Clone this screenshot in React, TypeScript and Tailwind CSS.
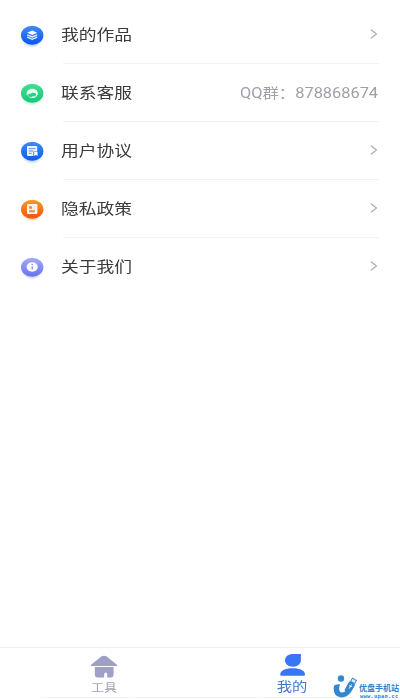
import type { ReactNode } from 'react'

type MenuItem = {
  label: string
  icon: ReactNode
  value?: string
}

type BadgeProps = {
  id: string
  from: string
  to: string
  glow: string
  children: ReactNode
}

function Badge({ id, from, to, glow, children }: BadgeProps) {
  return (
    <svg viewBox="0 0 32 30" className="w-8 h-[30px] shrink-0">
      <defs>
        <linearGradient id={id} x1="0" y1="0" x2="0" y2="1">
          <stop offset="0" stopColor={from} />
          <stop offset="1" stopColor={to} />
        </linearGradient>
        <filter id={`${id}-glow`} x="-30%" y="-30%" width="160%" height="160%">
          <feGaussianBlur stdDeviation="1.3" />
        </filter>
      </defs>
      <ellipse cx="16" cy="17.5" rx="9.5" ry="8.8" fill={glow} opacity="0.45" filter={`url(#${id}-glow)`} />
      <ellipse cx="16.2" cy="15.2" rx="11.2" ry="9.5" fill={`url(#${id})`} />
      {children}
    </svg>
  )
}

const items: MenuItem[] = [
  {
    label: '我的作品',
    icon: (
      <Badge id="works" from="#3f8cfb" to="#0b55ee" glow="#4d8dff">
        <path d="M16.2 10.5l5 2.2-5 2.2-5-2.2z" fill="#fff" />
        <path d="M11.2 14.800l5 2.1 5-2.1M11.2 17.2l5 2.1 5-2.1" fill="none" stroke="#e6f0ff" strokeWidth="1.4" />
      </Badge>
    ),
  },
  {
    label: '联系客服',
    value: 'QQ群：878868674',
    icon: (
      <Badge id="service" from="#3fe08f" to="#17c777" glow="#4be39b">
        <path
          d="M10.500 16.800c-.3-3.800 2-6 5.700-6s6 2.200 5.700 6h-1.700l-.9-2.100c-1 .5-1.900.4-2.700-.3-1.200 1.200-2.600 1.500-4 1l-.5 1.400z"
          fill="#e9fff3"
        />
        <path d="M12 17.300c.8 1.700 2.200 2.500 4.200 2.500" fill="none" stroke="#b5f5d4" strokeWidth="0.900" />
        <path d="M20.600 16.500c-.2 1.600-1.200 2.600-3 2.900" fill="none" stroke="#e9fff3" strokeWidth="1.100" />
        <ellipse cx="17" cy="19.200" rx="1.500" ry="0.900" fill="#e9fff3" />
      </Badge>
    ),
  },
  {
    label: '用户协议',
    icon: (
      <Badge id="terms" from="#3a8df8" to="#0c5dee" glow="#4d8dff">
        <rect x="11" y="10.100" width="10.200" height="9.800" rx="1" fill="#eef5ff" />
        <path d="M12.700 12.700h6.800M12.700 15h4.500M12.700 17.300h3" stroke="#3d86f3" strokeWidth="0.900" />
        <path d="M17.300 15.500h4.700v4.500h-4.700z" fill="#2f7cf2" />
        <path d="M18.200 16.100h3.300v4l-1.600-1.300-1.700 1.300z" fill="#fff" />
      </Badge>
    ),
  },
  {
    label: '隐私政策',
    icon: (
      <Badge id="privacy" from="#fb9a28" to="#f0530e" glow="#ff9655">
        <rect x="11" y="10.100" width="10.400" height="9.900" rx="1" fill="#fff4e9" />
        <path d="M13 12.200h3v2.500h-3zM13 16.200h6v2h-6z" fill="#f58b45" />
        <path d="M17.200 12.700h2M17.200 14.300h2" stroke="#fbc7a2" strokeWidth="0.700" />
      </Badge>
    ),
  },
  {
    label: '关于我们',
    icon: (
      <Badge id="about" from="#a6adf6" to="#6672ee" glow="#8e98ff">
        <ellipse cx="16.200" cy="15" rx="5.600" ry="4.700" fill="#fff" />
        <path d="M16.200 14.200v3.300" stroke="#7c86ee" strokeWidth="1.200" />
        <circle cx="16.200" cy="12.600" r="0.750" fill="#7c86ee" />
      </Badge>
    ),
  },
]

function Chevron() {
  return (
    <svg viewBox="0 0 8 10" className="w-2 h-2.5 mr-px mb-0.5" fill="none" stroke="#a9a9af" strokeWidth="1.1">
      <path d="M1 0.800l5.500 4.200-5.500 4.200" />
    </svg>
  )
}

function HomeIcon() {
  return (
    <svg viewBox="0 0 28 24" className="w-7 h-6" fill="#9fa0c8">
      <path d="M11.600 1.300Q14 .1 16.400 1.300L27 9.700q.8 1.100-.5 1.300H1.500Q.2 10.800 1 9.700z" />
      <path d="M4.800 12h18.800v7.500q0 3-3 3h-3.400v-3.300q0-1.700-1.500-1.700t-1.500 1.700v3.300H7.800q-3 0-3-3z" />
    </svg>
  )
}

function ProfileIcon() {
  return (
    <svg viewBox="0 0 28 24" className="w-7 h-6" fill="#3975f6">
      <path d="M14 .9h7.900v6.200c0 3.900-3.300 6.700-7.900 6.700S6 11 6 7.300 9.400.9 14 .9z" />
      <path d="M1.200 21.800c0-4 4.500-6.500 12.400-6.500S26 17.800 26 21.800q0 1-1 1H2.200q-1 0-1-1z" />
    </svg>
  )
}

function Watermark() {
  return (
    <div className="absolute left-[333px] top-[674px] w-[67px] h-[26px] flex text-[#2f82cc]">
      <svg viewBox="0 0 24 26" className="w-6 h-[26px] shrink-0">
        <circle cx="8" cy="4.500" r="3.200" fill="#3187d2" />
        <path
          d="M1 11.500q3.200-1.500 6-1.300-2 6.500.8 8 2.800 1.200 6.400-2.600l3.300 3q-4.600 5.700-10.300 4.700Q-.6 22 1 11.500z"
          fill="#3187d2"
        />
        <g transform="rotate(30 17.500 12)">
          <rect x="14.200" y="7.600" width="6.800" height="12" rx="2.600" fill="#3187d2" />
          <rect x="15.300" y="4.300" width="4.600" height="3.600" fill="#d8ecfa" stroke="#3187d2" strokeWidth="0.900" />
          <path d="M17.600 10v5M16.300 11.500l1.300 1.500 1.300-1.500" fill="none" stroke="#fff" strokeWidth="0.700" />
        </g>
      </svg>
      <div className="pt-[9px] pl-[2px] whitespace-nowrap">
        <div className="text-[8px] leading-[10px] font-bold">优盘手机站</div>
        <div className="pl-px text-[5.5px] leading-[6px] font-bold tracking-[0.2px] font-['DejaVu_Sans_Mono',monospace]">
          www.upan.cc
        </div>
      </div>
    </div>
  )
}

export default function App() {
  return (
    <div className="relative w-[400px] h-[700px] overflow-hidden bg-white flex flex-col font-['Noto_Sans_CJK_SC',sans-serif]">
      <ul className="flex-1 pt-[6px]">
        {items.map((item, index) => (
          <li key={item.label} className="h-[58px] flex pl-4 pr-[21px]">
            <div className="h-[58px] flex items-center">{item.icon}</div>
            <div
              className={`ml-[15px] flex-1 flex items-center justify-between border-b ${
                index < items.length - 1 ? 'border-[#f3f3f5]' : 'border-transparent'
              }`}
            >
              <span className="origin-left scale-x-[1.185] -ml-[2px] pb-0.5 text-[15px] leading-5 text-[#3a3a3a]">
                {item.label}
              </span>
              {item.value ? (
                <span className="origin-right scale-x-[1.17] mr-px text-[14px] leading-5 text-[#a0a1a8] font-[Roboto,'Noto_Sans_CJK_SC',sans-serif]">
                  {item.value}
                </span>
              ) : (
                <Chevron />
              )}
            </div>
          </li>
        ))}
      </ul>

      {/* Bottom tabs */}
      <nav className="h-[53px] flex border-t border-[#eeeeef]">
        <div className="w-[208px] flex flex-col items-center pt-[7px]">
          <HomeIcon />
          <span className="mt-px scale-x-[1.18] text-[11px] leading-[14px] text-[#a0a3b0]">工具</span>
        </div>
        <div className="w-[169px] flex flex-col items-center pt-[5px]">
          <ProfileIcon />
          <span className="mt-[2px] scale-x-[1.18] text-[13px] leading-[14px] text-[#4678c8]">我的</span>
        </div>
      </nav>
      <div className="absolute left-[42px] top-[697px] flex gap-[2px]">
        <div className="w-[91px] h-px bg-[#f1f1f1]" />
        <div className="w-[127px] h-px bg-[#f1f1f1]" />
        <div className="w-[90px] h-px bg-[#f1f1f1]" />
      </div>
      <Watermark />
    </div>
  )
}
